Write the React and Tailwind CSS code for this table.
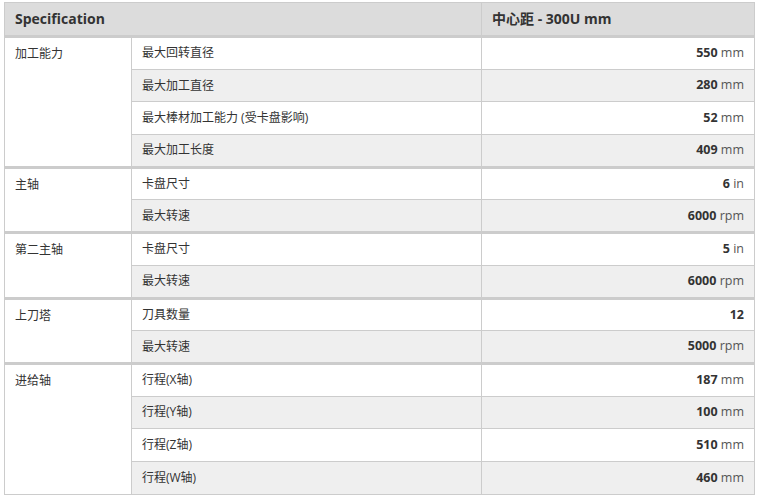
import React from "react"

// spec table data: each group has a label and its rows
const groups = [
  {
    label: "加工能力",
    rows: [
      ["最大回转直径", "550", "mm"],
      ["最大加工直径", "280", "mm"],
      ["最大棒材加工能力 (受卡盘影响)", "52", "mm"],
      ["最大加工长度", "409", "mm"],
    ],
  },
  {
    label: "主轴",
    rows: [
      ["卡盘尺寸", "6", "in"],
      ["最大转速", "6000", "rpm"],
    ],
  },
  {
    label: "第二主轴",
    rows: [
      ["卡盘尺寸", "5", "in"],
      ["最大转速", "6000", "rpm"],
    ],
  },
  {
    label: "上刀塔",
    rows: [
      ["刀具数量", "12", ""],
      ["最大转速", "5000", "rpm"],
    ],
  },
  {
    label: "进给轴",
    rows: [
      ["行程(X轴)", "187", "mm"],
      ["行程(Y轴)", "100", "mm"],
      ["行程(Z轴)", "510", "mm"],
      ["行程(W轴)", "460", "mm"],
    ],
  },
]

export default function App() {
  return (
    <div className="w-[759px] h-[498px] bg-white pt-[2px] pl-[4px] font-['Open_Sans','Noto_Sans_CJK_SC',sans-serif] text-[12px] text-[#333]">
      <table className="w-[750px] border-collapse table-fixed">
        <colgroup>
          <col className="w-[127px]" />
          <col className="w-[350px]" />
          <col className="w-[273px]" />
        </colgroup>
        <thead>
          <tr className="bg-[#dcdcdc]">
            <th
              colSpan={2}
              className="h-[34px] border border-[#ccc] border-b-[3px] text-left font-bold text-[14px] pl-[10px] leading-none"
            >
              Specification
            </th>
            <th className="h-[34px] border border-[#ccc] border-b-[3px] text-left font-bold text-[14px] pl-[10px] leading-none">
              中心距 - 300U mm
            </th>
          </tr>
        </thead>
        <tbody>
          {groups.map((g, gi) =>
            g.rows.map((r, ri) => {
              const first = ri === 0
              const top = first && gi > 0 ? "border-t-[3px]" : ""
              const bg = ri % 2 === 1 ? "bg-[#efefef]" : "bg-white"
              return (
                <tr key={gi + "-" + ri}>
                  {first && (
                    <td
                      rowSpan={g.rows.length}
                      className={`border border-[#ccc] ${top} align-top pl-[10px] pt-[10px] bg-white leading-none`}
                    >
                      {g.label}
                    </td>
                  )}
                  <td className={`h-[32.7px] border border-[#ccc] ${top} ${bg} pl-[10px] leading-none`}>
                    {r[0]}
                  </td>
                  <td className={`h-[32.7px] border border-[#ccc] ${top} ${bg} pr-[10px] text-right leading-none text-[12.5px]`}>
                    <span className="font-bold">{r[1]}</span>
                    {r[2] && <span className="text-[#555]"> {r[2]}</span>}
                  </td>
                </tr>
              )
            })
          )}
        </tbody>
      </table>
    </div>
  )
}
